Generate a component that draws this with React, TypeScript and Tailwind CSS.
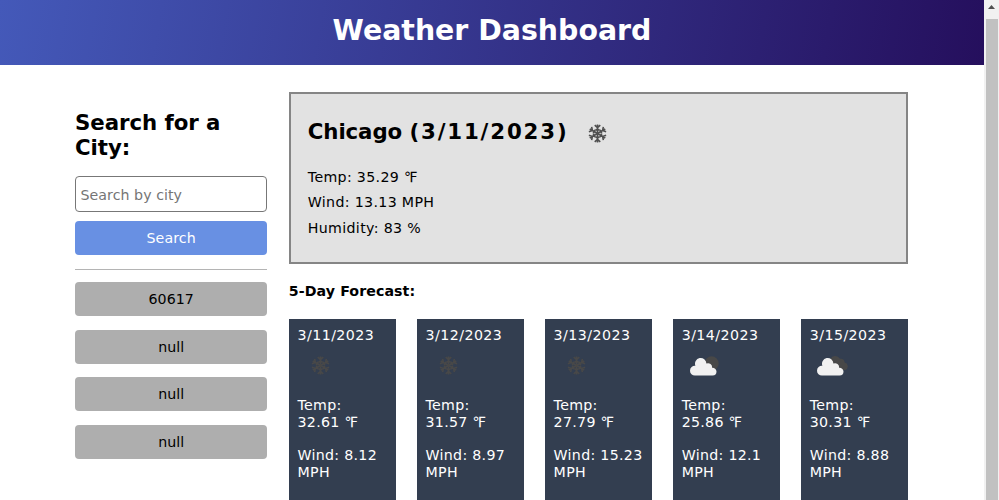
import React from "react";

type Sky = "snow" | "broken" | "overcast";

const forecast: { date: string; sky: Sky; temp: string; wind: string }[] = [
  { date: "3/11/2023", sky: "snow", temp: "32.61", wind: "8.12" },
  { date: "3/12/2023", sky: "snow", temp: "31.57", wind: "8.97" },
  { date: "3/13/2023", sky: "snow", temp: "27.79", wind: "15.23" },
  { date: "3/14/2023", sky: "broken", temp: "25.86", wind: "12.1" },
  { date: "3/15/2023", sky: "overcast", temp: "30.31", wind: "8.88" },
];

const history = ["60617", "null", "null", "null"];

function Snowflake({ className }: { className: string }) {
  return (
    <svg viewBox="-10 -10 20 20" fill="none" stroke="currentColor" strokeWidth="1.7" className={className}>
      {[0, 60, 120, 180, 240, 300].map((angle) => (
        <g key={angle} transform={`rotate(${angle})`}>
          <path d="M0 0V-9.4M-2.9 -8.8L0 -6.2L2.9 -8.8M-2.1 -3.7L0 -4.6L2.1 -3.7" />
        </g>
      ))}
    </svg>
  );
}

function Cloud({ overcast }: { overcast: boolean }) {
  return (
    <svg viewBox="0 0 32 22" className={overcast ? "ml-[7px] block h-[22px] w-8" : "ml-[8px] block h-[22px] w-8"}>
      {overcast ? (
        <path
          fill="#484848"
          d="M12 8L13.2 3.2A5.6 5.6 0 0 1 23 2.8A3.6 3.6 0 0 1 27.6 6.6A3.9 3.9 0 0 1 28.5 14H18Z"
        />
      ) : (
        <circle cx="21.6" cy="7.4" r="7.1" fill="#484848" />
      )}
      <path
        fill="#f1f1f1"
        d="M5 19.6A4.9 4.9 0 0 1 0 14.7A4.9 4.9 0 0 1 5.4 9.8A5.7 5.7 0 1 1 16.4 7.6A3.9 3.9 0 0 1 22 11.8A4 4 0 0 1 26.5 15.6A4 4 0 0 1 22.6 19.6Z"
      />
    </svg>
  );
}

export default function App() {
  return (
    <div className="flex h-[500px] w-[999px] overflow-hidden bg-white font-['DejaVu_Sans',sans-serif] text-[14.2px] leading-[17px] text-black">
      <div className="w-[984px] shrink-0">
        <header className="flex h-[65px] items-center justify-center bg-[linear-gradient(100deg,#4459b9,#250f5d)] pb-[5px] text-[28.4px] font-bold text-white">
          <h1>Weather Dashboard</h1>
        </header>
        <div className="flex pl-[75px] pt-[27px]">
          <aside className="mr-[21.5px] w-[192.3px] shrink-0 pt-[18px]">
            <h2 className="text-[21.3px] font-bold leading-[25px] tracking-[-0.05px]">
              Search for a<br />
              City:
            </h2>
            <input
              placeholder="Search by city"
              className="mt-4 block h-[36px] w-full rounded-[4px] border border-[#777] bg-white px-[4.5px] pt-[2px] tracking-[0.05px] placeholder:text-[#757575]"
            />
            <button className="mt-[9px] block h-[34px] w-full rounded-[4px] bg-[#6890e3] tracking-[0.1px] text-white">
              Search
            </button>
            <hr className="mb-[12.5px] mt-[13.5px] border-t border-[#b4b4b4]" />
            <div className="flex flex-col gap-[13.6px]">
              {history.map((city, i) => (
                <button key={i} className="h-[34px] rounded-[4px] bg-[#aeaeae] pt-[1.5px]">
                  {city}
                </button>
              ))}
            </div>
          </aside>
          <main className="w-[619px] shrink-0">
            <section className="h-[172px] border-2 border-[#858585] bg-[#e2e2e2] pl-[17px] pt-[24px]">
              <div className="flex h-[26px] items-center">
                <h2 className="text-[21.3px] font-bold tracking-[-0.1px]">
                  Chicago <span className="tracking-[1.85px]">(3/11/2023)</span>
                </h2>
                <Snowflake className="ml-[20px] mt-[5px] size-[19px] text-[#505050]" />
              </div>
              <div className="mt-[21px] leading-[25.3px] tracking-[0.33px]">
                <p>Temp: 35.29 ℉</p>
                <p>Wind: 13.13 MPH</p>
                <p>Humidity: 83 %</p>
              </div>
            </section>
            <h3 className="mt-[19px] font-bold tracking-[0.08px]">5-Day Forecast:</h3>
            <div className="mt-[18.5px] grid grid-cols-5 gap-[21.3px]">
              {forecast.map((day) => (
                <article
                  key={day.date}
                  className="h-[220px] bg-[#333e50] pl-[8.7px] pt-[8px] leading-[16.5px] tracking-[0.3px] text-white"
                >
                  <p className="tracking-[0.45px]">{day.date}</p>
                  <div className="flex h-[45px] pt-[13px]">
                    {day.sky === "snow" ? (
                      <Snowflake className="ml-[13.5px] size-[19px] text-[#484848]" />
                    ) : (
                      <Cloud overcast={day.sky === "overcast"} />
                    )}
                  </div>
                  <p className="mt-[9px]">
                    Temp:
                    <br />
                    {day.temp} ℉
                  </p>
                  <p className="mt-[17px]">
                    Wind: {day.wind}
                    <br />
                    MPH
                  </p>
                </article>
              ))}
            </div>
          </main>
        </div>
      </div>
      <div className="flex w-[15px] shrink-0 flex-col items-center bg-[#f1f1f1]">
        <svg viewBox="0 0 15 19" className="h-[19px] w-[15px] shrink-0">
          <path d="M4 9L7.5 5L11 9Z" fill="#505050" />
        </svg>
        <div className="w-[12px] flex-1 bg-[#c1c1c1]" />
      </div>
    </div>
  );
}
